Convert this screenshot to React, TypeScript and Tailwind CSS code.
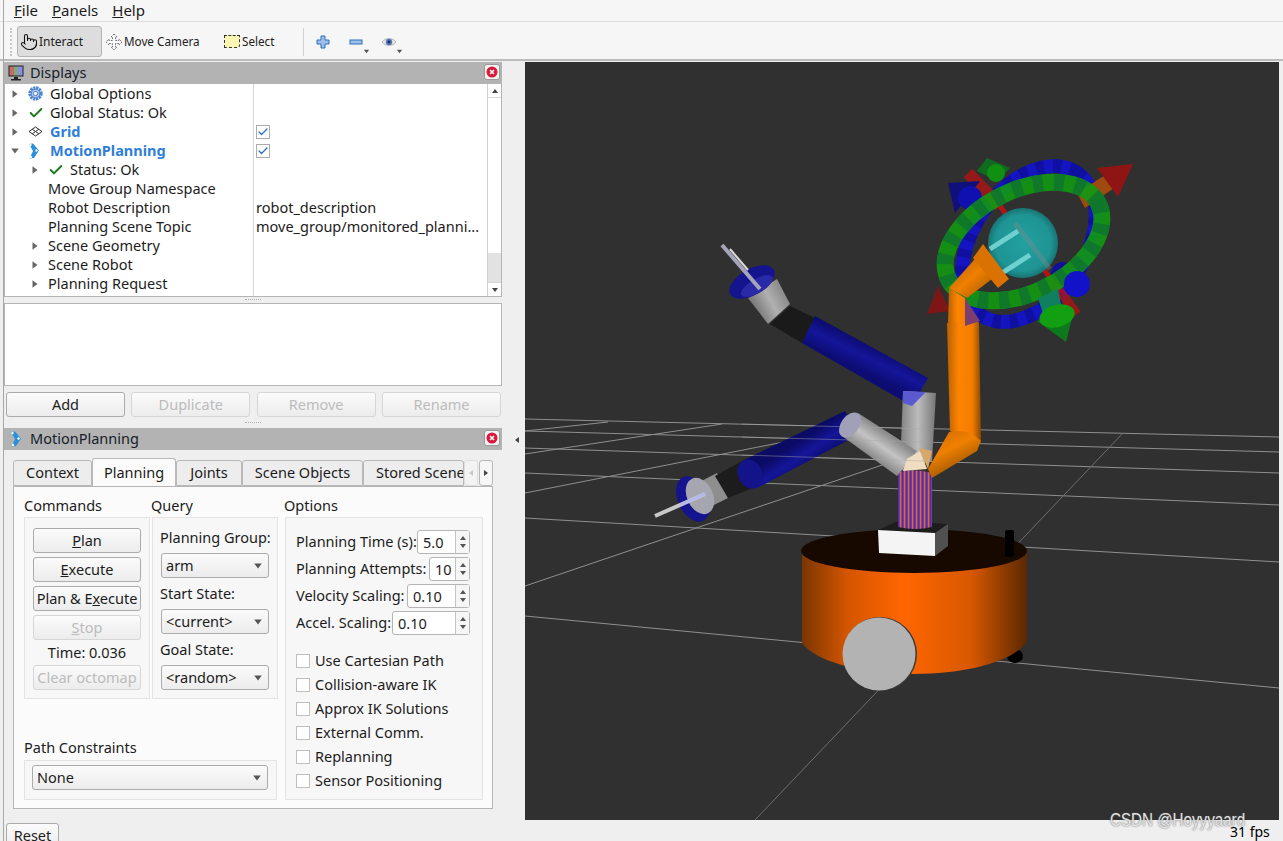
import { Check, Pointer } from "lucide-react";
import type { ReactNode } from "react";

const ui = { fontFamily: '"Noto Sans", "Open Sans", sans-serif' };

function Tri({ dir = "down", color = "#555", size = 8 }: { dir?: string; color?: string; size?: number }) {
  const points =
    dir === "down" ? "1,2 7,2 4,6" : dir === "up" ? "1,6 7,6 4,2" : dir === "right" ? "2,1 6,4 2,7" : "6,1 2,4 6,7";
  return (
    <svg width={size} height={size} viewBox="0 0 8 8" className="shrink-0">
      <polygon points={points} fill={color} />
    </svg>
  );
}

function GearIcon() {
  return (
    <svg width="15" height="15" viewBox="0 0 24 24">
      <circle cx="12" cy="12" r="9" fill="none" stroke="#4f86d6" strokeWidth="5" strokeDasharray="3.6 1.1" />
      <circle cx="12" cy="12" r="7" fill="#a9c6ee" stroke="#3f74c4" strokeWidth="1.4" />
      <circle cx="12" cy="12" r="3.4" fill="#fff" stroke="#3f74c4" strokeWidth="1.4" />
    </svg>
  );
}

function GridIcon() {
  return (
    <svg width="15" height="11" viewBox="0 0 15 11" fill="none" stroke="#333" strokeWidth="1">
      <path d="M7.5 1 14 5.500 7.500 10 1 5.500Z" />
      <path d="M4.200 3.200 10.800 7.800M10.800 3.200 4.200 7.800" />
    </svg>
  );
}

function PlanningIcon() {
  return (
    <svg width="12" height="16" viewBox="0 0 12 16">
      <path d="M1 1 5 0.500 11 7.500 6 15 1.500 15.500 5 8Z" fill="#2a8fdc" />
      <circle cx="2.500" cy="2" r="1.200" fill="#fff" />
      <circle cx="8.500" cy="7.500" r="1.200" fill="#fff" />
      <circle cx="3" cy="14" r="1.200" fill="#fff" />
    </svg>
  );
}

function CloseBtn() {
  return (
    <div className="mt-[2px] flex h-[16px] w-[16px] items-center justify-center self-start rounded-[3px] border border-[#9a9a9a] bg-[#f4f4f4]">
      <svg width="12" height="12" viewBox="0 0 12 12">
        <circle cx="6" cy="6" r="5.500" fill="#d9183b" />
        <path d="M4 4 8 8M8 4 4 8" stroke="#fff" strokeWidth="1.500" />
      </svg>
    </div>
  );
}

function TitleBar({ icon, title }: { icon: ReactNode; title: string }) {
  return (
    <div className="flex h-[22px] w-[498px] items-center justify-between bg-[#b3b3b3] pl-[3px] pr-[2px] text-[14.5px] text-[#15202b]">
      <div className="flex items-center gap-[6px]">
        <div className="flex w-[17px] justify-center">{icon}</div>
        <span>{title}</span>
      </div>
      <CloseBtn />
    </div>
  );
}

interface TreeRow {
  label: string;
  depth: number;
  arrow?: "right" | "down";
  icon?: ReactNode;
  bold?: boolean;
  checked?: boolean;
  value?: string;
}

const okIcon = <Check size={16} strokeWidth={3} color="#1c7a1c" />;

const treeRows: TreeRow[] = [
  { label: "Global Options", depth: 0, arrow: "right", icon: <GearIcon /> },
  { label: "Global Status: Ok", depth: 0, arrow: "right", icon: okIcon },
  { label: "Grid", depth: 0, arrow: "right", icon: <GridIcon />, bold: true, checked: true },
  { label: "MotionPlanning", depth: 0, arrow: "down", icon: <PlanningIcon />, bold: true, checked: true },
  { label: "Status: Ok", depth: 1, arrow: "right", icon: okIcon },
  { label: "Move Group Namespace", depth: 1 },
  { label: "Robot Description", depth: 1, value: "robot_description" },
  { label: "Planning Scene Topic", depth: 1, value: "move_group/monitored_planni..." },
  { label: "Scene Geometry", depth: 1, arrow: "right" },
  { label: "Scene Robot", depth: 1, arrow: "right" },
  { label: "Planning Request", depth: 1, arrow: "right" },
  { label: "Planning Metrics", depth: 1, arrow: "right" },
];

function Row({ row }: { row: TreeRow }) {
  return (
    <div className="flex h-[19px] shrink-0 items-center">
      <div className="flex h-full w-[249px] shrink-0 items-center border-r border-[#d4d4d4]">
        <div className={row.depth === 0 ? "flex w-[21px] pl-[5px]" : "flex w-[43px] pl-[25px]"}>
          {row.arrow && <Tri dir={row.arrow} color="#666" size={10} />}
        </div>
        {row.icon && (
          <div className={row.depth === 0 ? "flex w-[24px] pl-[2px]" : "flex w-[22px]"}>{row.icon}</div>
        )}
        <span className={row.bold ? "font-bold text-[#2f7ed8]" : ""}>{row.label}</span>
      </div>
      <div className="flex items-center pl-[2px]">
        {row.checked !== undefined && (
          <div className="flex h-[14px] w-[14px] items-center justify-center border border-[#adadad] bg-white">
            <Check size={12} strokeWidth={2.5} color="#2b6fc2" />
          </div>
        )}
        {row.value && <span className="whitespace-nowrap">{row.value}</span>}
      </div>
    </div>
  );
}

function PushButton({
  children,
  disabled,
  className,
}: {
  children: ReactNode;
  disabled?: boolean;
  className: string;
}) {
  return (
    <div
      className={`flex items-center justify-center rounded-[3px] border bg-gradient-to-b from-[#fbfbfb] to-[#ececec] ${
        disabled ? "border-[#d6d6d6] text-[#bcbcbc]" : "border-[#ababab] text-[#1c1c1c]"
      } ${className}`}
    >
      {children}
    </div>
  );
}

function Combo({ label, className }: { label: string; className: string }) {
  return (
    <div
      className={`flex h-[25px] items-center justify-between rounded-[3px] border border-[#ababab] bg-gradient-to-b from-[#fbfbfb] to-[#ececec] pl-[4px] pr-[5px] ${className}`}
    >
      <span>{label}</span>
      <Tri color="#555" size={10} />
    </div>
  );
}

function Spin({ value, className }: { value: string; className: string }) {
  return (
    <div className={`flex h-[24px] rounded-[3px] border border-[#b5b5b5] bg-white ${className}`}>
      <span className="flex-1 pl-[5px] leading-[23px]">{value}</span>
      <div className="flex w-[14px] flex-col items-center justify-center border-l border-[#c4c4c4] bg-[#f6f6f6]">
        <Tri dir="up" color="#555" />
        <Tri dir="down" color="#555" />
      </div>
    </div>
  );
}

function OptionRow({ label, value, spin }: { label: string; value: string; spin: string }) {
  return (
    <div className="flex h-[27px] items-center justify-between whitespace-nowrap">
      <span>{label}</span>
      <Spin value={value} className={spin} />
    </div>
  );
}

function Toggle({ label }: { label: string }) {
  return (
    <div className="flex h-[24px] items-center gap-[5px]">
      <div className="h-[14px] w-[14px] border border-[#c0c0c0] bg-white" />
      <span>{label}</span>
    </div>
  );
}

function Tab({ label, className, active }: { label: string; className: string; active?: boolean }) {
  return (
    <div
      className={`flex items-center justify-center overflow-hidden whitespace-nowrap rounded-t-[3px] border border-[#b8b8b8] ${
        active ? "h-[28px] border-b-0 bg-[#fbfbfb]" : "h-[26px] bg-[#ededed]"
      } ${className}`}
    >
      {label}
    </div>
  );
}

function Toolbar() {
  return (
    <div className="flex h-[39px] shrink-0 items-center border-b-2 border-[#bcbcbc] bg-[#f6f6f6] pl-[10px] pt-[2px] text-[11.7px] text-[#222]">
      <div className="h-[28px] w-[3px] border-l-2 border-dotted border-[#c6c6c6]" />
      <div className="ml-[4px] flex h-[31px] w-[85px] items-center rounded-[3px] border border-[#b4b4b4] bg-[#dddddd] pl-[2px]">
        <Pointer size={18} strokeWidth={1.4} color="#111" />
        <span className="ml-[1px] text-[12px]">Interact</span>
      </div>
      <div className="ml-[3px] flex w-[119px] items-center">
        <svg width="18" height="18" viewBox="0 0 18 18">
          <path
            d="M9 1 12 4H10.500V7.500H14V6L17 9 14 12V10.500H10.500V14H12L9 17 6 14H7.500V10.500H4V12L1 9 4 6V7.500H7.500V4H6Z"
            fill="#fff"
            stroke="#777"
            strokeWidth="1"
            strokeDasharray="2 1"
          />
        </svg>
        <span className="ml-[1px]">Move Camera</span>
      </div>
      <div className="flex w-[79px] items-center">
        <div className="h-[13px] w-[16px] rounded-br-[3px] border border-dashed border-[#333] bg-[#fbf6b4]" />
        <span className="ml-[2px]">Select</span>
      </div>
      <div className="h-[28px] w-px bg-[#d2d2d2]" />
      <svg width="14" height="14" viewBox="0 0 14 14" className="ml-[12px]">
        <path d="M5 1h4v4h4v4H9v4H5V9H1V5h4z" fill="#9cc0ea" stroke="#2f6fb8" strokeWidth="1" />
      </svg>
      <div className="relative ml-[19px]">
        <svg width="14" height="8" viewBox="0 0 14 8" className="block">
          <rect x="1" y="2" width="12" height="4" fill="#9cc0ea" stroke="#2f6fb8" />
        </svg>
        <div className="absolute left-[14px] top-[10px]">
          <Tri color="#555" size={7} />
        </div>
      </div>
      <div className="relative ml-[18px]">
        <svg width="16" height="12" viewBox="0 0 16 12" className="block">
          <path d="M1 6C4 1.500 12 1.500 15 6 12 10.500 4 10.500 1 6Z" fill="#e4e4e4" stroke="#b8b8b8" />
          <circle cx="8" cy="6" r="3.200" fill="#5a78c0" />
          <circle cx="8" cy="6" r="1.400" fill="#1d2b5a" />
        </svg>
        <div className="absolute left-[15px] top-[12px]">
          <Tri color="#555" size={7} />
        </div>
      </div>
    </div>
  );
}

function Scene() {
  const gridLines = [
    "525,418 1279,436",
    "525,430 1279,451",
    "525,447 1279,472",
    "525,472 1279,504",
    "525,517 1279,561",
    "525,615 1279,687",
    "525,430 608,421",
    "525,453 722,423",
    "525,492 870,424",
    "525,585 900,458",
  ];
  return (
    <svg viewBox="525 61 754 758" className="block h-[758px] w-[754px]">
      <defs>
        <linearGradient id="base" x1="0" x2="1" y1="0" y2="0">
          <stop offset="0" stopColor="#7a3600" />
          <stop offset="0.2" stopColor="#d45500" />
          <stop offset="0.45" stopColor="#ff6600" />
          <stop offset="0.75" stopColor="#d85800" />
          <stop offset="1" stopColor="#5a2800" />
        </linearGradient>
        <linearGradient id="link" x1="0" x2="1" y1="0" y2="0">
          <stop offset="0" stopColor="#b86200" />
          <stop offset="0.35" stopColor="#ff8400" />
          <stop offset="0.75" stopColor="#f27c00" />
          <stop offset="1" stopColor="#8a4a00" />
        </linearGradient>
        <linearGradient id="elbow" gradientUnits="userSpaceOnUse" x1="945" y1="430" x2="965" y2="470">
          <stop offset="0" stopColor="#d87000" />
          <stop offset="0.4" stopColor="#f08000" />
          <stop offset="1" stopColor="#945200" />
        </linearGradient>
        <linearGradient id="wrist" gradientUnits="userSpaceOnUse" x1="960" y1="262" x2="985" y2="290">
          <stop offset="0" stopColor="#c46a00" />
          <stop offset="0.5" stopColor="#f08000" />
          <stop offset="1" stopColor="#b86400" />
        </linearGradient>
        <linearGradient id="blueUpper" gradientUnits="userSpaceOnUse" x1="815" y1="315" x2="802" y2="342">
          <stop offset="0" stopColor="#0b0b6a" />
          <stop offset="0.5" stopColor="#15159a" />
          <stop offset="1" stopColor="#0c0c72" />
        </linearGradient>
        <linearGradient id="blueLower" gradientUnits="userSpaceOnUse" x1="845" y1="410" x2="860" y2="433">
          <stop offset="0" stopColor="#0b0b66" />
          <stop offset="0.5" stopColor="#15159a" />
          <stop offset="1" stopColor="#0c0c70" />
        </linearGradient>
        <linearGradient id="steel" x1="0" x2="1" y1="0" y2="0">
          <stop offset="0" stopColor="#808080" />
          <stop offset="0.5" stopColor="#bcbcbc" />
          <stop offset="1" stopColor="#767676" />
        </linearGradient>
        <linearGradient id="steelHand" gradientUnits="userSpaceOnUse" x1="750" y1="295" x2="778" y2="280">
          <stop offset="0" stopColor="#7e7e7e" />
          <stop offset="0.5" stopColor="#b0b0b0" />
          <stop offset="1" stopColor="#8a8a8a" />
        </linearGradient>
        <linearGradient id="steelLower" gradientUnits="userSpaceOnUse" x1="858" y1="412" x2="842" y2="435">
          <stop offset="0" stopColor="#8a8a8a" />
          <stop offset="0.5" stopColor="#c4c4c4" />
          <stop offset="1" stopColor="#8c8c8c" />
        </linearGradient>
        <radialGradient id="ball" cx="0.5" cy="0.5" r="0.5">
          <stop offset="0" stopColor="#22a0a0" />
          <stop offset="0.8" stopColor="#1f9494" />
          <stop offset="1" stopColor="#187474" />
        </radialGradient>
        <pattern id="stripes" width="4" height="3" patternUnits="userSpaceOnUse">
          <rect width="4" height="3" fill="#7b3f86" />
          <rect width="1.200" height="3" fill="#d9683f" />
          <rect x="2" width="1" height="3" fill="#4a2cc4" />
        </pattern>
      </defs>
      <rect x="525" y="61" width="754" height="758" fill="#303030" />
      {gridLines.map((l) => (
        <polyline key={l} points={l} fill="none" stroke="#8f8f8f" strokeWidth="1" />
      ))}
      <polyline points="1123,432 755,819" fill="none" stroke="#6e6e6e" strokeWidth="1" />

      {/* base */}
      <ellipse cx="1015" cy="655" rx="8" ry="7" fill="#000" />
      <path d="M802 551V642C815 660 860 673 914 673S1015 660 1027 640V550Z" fill="url(#base)" />
      <ellipse cx="914" cy="550" rx="113" ry="22" fill="#170800" />
      <rect x="1005" y="529" width="9" height="27" rx="2" fill="#000" />
      <circle cx="880" cy="653" r="37" fill="#3a3a3a" />
      <circle cx="879" cy="653" r="36.500" fill="#b3b3b3" />
      <path d="M878 529 898 520 948 523 935 532Z" fill="#1d1d1d" />
      <path d="M878 529 935 532V555L879 552Z" fill="#f4f4f4" />
      <path d="M935 532 948 523V545L935 555Z" fill="#505050" />

      {/* column */}
      <path d="M898 471Q915 467 932 472V526Q915 530 898 526Z" fill="url(#stripes)" />

      {/* orange arm */}
      <path d="M947 322 979 320 981 440 950 430Z" fill="url(#link)" />
      <path d="M928 468 949 431Q966 426 981 440L977 450 932 477Z" fill="url(#elbow)" />

      {/* upper arm, left side */}
      <path d="M748 297 777 278 790 303 768 323Z" fill="url(#steelHand)" />
      <path d="M790 305 815 317 802 342 770 323Z" fill="#1a1a1a" />
      <path d="M815 315 928 377 912 405 802 342Z" fill="url(#blueUpper)" />
      <ellipse cx="752" cy="281" rx="25" ry="13" transform="rotate(-30 752 281)" fill="#14148e" />
      <ellipse cx="757" cy="285" rx="18" ry="7" transform="rotate(-30 757 285)" fill="#2a2aa6" />
      <path d="M722 244 760 288" stroke="#a4a4bc" strokeWidth="4" />
      <path d="M730 248 748 269" stroke="#dcdcdc" strokeWidth="2" />
      <path d="M903 390 936 392 932 460 900 470Z" fill="url(#steel)" />
      <path d="M903 390 926 391 912 405 903 402Z" fill="#5a5ad0" />

      {/* lower arm, left side */}
      <path d="M688 487 717 472 728 497 702 510Z" fill="#8e8e8e" />
      <path d="M715 475 742 460 753 487 728 497Z" fill="#1c1c1c" />
      <path d="M742 460 845 410 860 433 757 487Z" fill="url(#blueLower)" />
      <ellipse cx="750" cy="473" rx="12" ry="15" transform="rotate(-25 750 473)" fill="#14148a" />
      <ellipse cx="693" cy="498" rx="15" ry="24" transform="rotate(-25 693 498)" fill="#14148e" />
      <ellipse cx="700" cy="495" rx="13" ry="19" transform="rotate(-25 700 495)" fill="#a6a6b0" />
      <path d="M655 515 705 493" stroke="#c8c8c8" strokeWidth="4" />
      <path d="M680 504 705 493" stroke="#b6b8f0" strokeWidth="3" />
      <path d="M858 412 842 435 897 475 917 450Z" fill="url(#steelLower)" />
      <ellipse cx="850" cy="424" rx="9" ry="14" transform="rotate(36 850 424)" fill="#a0a0b8" />
      <path d="M903 470 907 458 920 450 927 468Z" fill="#f0dcc0" />
      <path d="M932 450 928 468 919 447Z" fill="#d8a868" />
      <g stroke="#a8a8a8" strokeOpacity="0.45" strokeWidth="1">
        <path d="M742 423 925 428M742 436 925 441M742 454 925 460" />
      </g>

      {/* interactive marker */}
      <circle cx="1063" cy="273" r="12" fill="#10109a" />
      <ellipse cx="1029" cy="243" rx="86" ry="56" transform="rotate(-56 1029 243)" fill="none" stroke="#1414c0" strokeWidth="14" />
      <ellipse cx="1029" cy="243" rx="86" ry="56" transform="rotate(-56 1029 243)" fill="none" stroke="#0a0a70" strokeWidth="14" strokeDasharray="8 9" strokeOpacity="0.4" />
      <path d="M987 157 1010 167 997 180 977 170Z" fill="#0f6b1f" />
      <circle cx="996" cy="172" r="9" fill="#109010" />
      <path d="M968 172 1000 205" stroke="#b01414" strokeWidth="12" strokeOpacity="0.8" />
      <path d="M1000 205 1052 280" stroke="#b01414" strokeWidth="5" />
      <path d="M1052 280 1077 313" stroke="#b01414" strokeWidth="9" strokeOpacity="0.8" />
      <path d="M1077 192 1107 173 1117 185 1085 207Z" fill="#a04a10" />
      <path d="M1133 163 1097 167 1118 196Z" fill="#8f1515" />
      <path d="M948 182 980 180 955 212Z" fill="#10107a" />
      <circle cx="970" cy="197" r="12" fill="#1010b0" />
      <circle cx="1023" cy="242" r="35" fill="url(#ball)" />
      <path d="M1015 222 1050 268" stroke="#8a8a8a" strokeWidth="5" strokeOpacity="0.35" />
      <ellipse cx="1023.500" cy="240.500" rx="84" ry="51" transform="rotate(-27 1023.500 240.500)" fill="none" stroke="#129a12" strokeWidth="17" strokeOpacity="0.9" />
      <ellipse cx="1023.500" cy="240.500" rx="84" ry="51" transform="rotate(-27 1023.500 240.500)" fill="none" stroke="#0f7030" strokeWidth="17" strokeDasharray="10 11" strokeOpacity="0.75" />
      <path d="M990 248 1018 230M1002 272 1030 254" stroke="#6fd0d0" strokeWidth="5" />
      <path d="M927 313 938 285 950 310Z" fill="#7f1616" />
      <circle cx="1077" cy="283" r="13" fill="#1212c8" />
      <path d="M1038 297 1058 288 1062 309 1043 313Z" fill="#0f7f60" />
      <path d="M1066 341 1037 320 1074 310Z" fill="#0c7a1c" />
      <ellipse cx="1057" cy="315" rx="18" ry="11" transform="rotate(-15 1057 315)" fill="#12a012" />

      {/* wrist over the rings */}
      <path d="M965 297 975 322 948 322 949 287Z" fill="url(#link)" />
      <path d="M965 297 980 320 965 325Z" fill="#7a3f70" />
      <path d="M949 287 982 250 992 278 967 297Z" fill="url(#wrist)" />
      <path d="M973 257 983 243 1009 278 998 287Z" fill="#d97200" />
    </svg>
  );
}

export default function App() {
  return (
    <div style={ui} className="relative flex h-[841px] w-[1283px] flex-col overflow-hidden bg-[#efefef] text-[14.5px] text-[#1c1c1c]">
      {/* menu bar */}
      <div className="flex h-[22px] shrink-0 items-center gap-[14px] border-b border-[#dcdcdc] bg-[#f6f6f6] pl-[14px] text-[15px]">
        <span><span className="underline">F</span>ile</span>
        <span><span className="underline">P</span>anels</span>
        <span><span className="underline">H</span>elp</span>
      </div>
      <Toolbar />

      <div className="flex min-h-0 flex-1">
        {/* left dock */}
        <div className="flex w-[525px] shrink-0 flex-col pt-px">
          <div className="ml-[4px] flex w-[498px] flex-col">
            <TitleBar
              title="Displays"
              icon={
                <svg width="16" height="16" viewBox="0 0 16 16">
                  <rect x="0.500" y="0.500" width="15" height="11" fill="#222" />
                  <rect x="1.500" y="1.500" width="4.500" height="9" fill="#c46a6a" />
                  <rect x="6" y="1.500" width="4" height="9" fill="#7ea87e" />
                  <rect x="10" y="1.500" width="4.500" height="9" fill="#8c8ce0" />
                  <rect x="6" y="12" width="4" height="2" fill="#222" />
                  <rect x="3" y="14" width="10" height="1.500" fill="#222" />
                </svg>
              }
            />
            {/* display tree */}
            <div className="flex h-[213px] w-[498px] border border-t-0 border-[#b5b5b5] bg-white">
              <div className="flex min-w-0 flex-1 flex-col overflow-hidden">
                {treeRows.map((r) => (
                  <Row key={r.label} row={r} />
                ))}
              </div>
              <div className="flex w-[14px] shrink-0 flex-col border-l border-[#d0d0d0] bg-white">
                <div className="flex h-[14px] items-center justify-center border-b border-[#d8d8d8]">
                  <Tri dir="up" color="#444" />
                </div>
                <div className="flex-1" />
                <div className="h-[29px] bg-[#e2e2e2]" />
                <div className="flex h-[14px] items-center justify-center border-t border-[#d8d8d8]">
                  <Tri color="#444" />
                </div>
              </div>
            </div>
            <div className="flex h-[6px] justify-center">
              <div className="mt-[2px] h-px w-[16px] border-t border-dotted border-[#b0b0b0]" />
            </div>
            <div className="h-[83px] w-[498px] border border-[#b5b5b5] bg-white" />
            <div className="ml-[2px] mt-[6px] flex w-[495px] justify-between">
              <PushButton className="h-[25px] w-[119px]">Add</PushButton>
              <PushButton disabled className="h-[25px] w-[119px]">Duplicate</PushButton>
              <PushButton disabled className="h-[25px] w-[119px]">Remove</PushButton>
              <PushButton disabled className="h-[25px] w-[119px]">Rename</PushButton>
            </div>
            <div className="flex h-[11px] items-center justify-center">
              <div className="h-px w-[16px] border-t border-dotted border-[#b0b0b0]" />
            </div>
            <div className="relative">
              <TitleBar title="MotionPlanning" icon={<PlanningIcon />} />
              <div className="absolute left-[509px] top-[8px]">
                <Tri dir="left" color="#444" />
              </div>
            </div>

            {/* tabs */}
            <div className="ml-[9px] mt-[8px] flex h-[28px] w-[480px] items-end">
              <Tab label="Context" className="w-[79px]" />
              <Tab label="Planning" className="w-[84px]" active />
              <Tab label="Joints" className="w-[66px]" />
              <Tab label="Scene Objects" className="w-[121px]" />
              <Tab label="Stored Scene" className="w-[101px] justify-start pl-[12px]" />
              <div className="flex h-[26px] w-[14px] items-center justify-center rounded-[3px] border border-[#dedede] bg-[#f3f3f3]">
                <Tri dir="left" color="#c8c8c8" />
              </div>
              <div className="ml-px flex h-[26px] w-[14px] items-center justify-center rounded-[3px] border border-[#b8b8b8] bg-[#f6f6f6]">
                <Tri dir="right" color="#444" />
              </div>
            </div>

            {/* planning pane */}
            <div className="ml-[9px] flex h-[323px] w-[480px] gap-[3px] border border-[#b5b5b5] bg-[#fbfbfb] pl-[10px] pt-[8px]">
              <div className="flex w-[254px] shrink-0 flex-col">
                <div className="flex">
                  <div className="w-[127px]">
                    <div className="h-[22px] leading-[21px]">Commands</div>
                    <div className="flex h-[182px] w-[126px] flex-col items-center border border-[#e4e4e4] bg-[#f7f7f7] pt-[10px]">
                      <PushButton className="h-[25px] w-[108px]"><span><span className="underline">P</span>lan</span></PushButton>
                      <PushButton className="mt-[4px] h-[25px] w-[108px]"><span><span className="underline">E</span>xecute</span></PushButton>
                      <PushButton className="mt-[4px] h-[25px] w-[108px] whitespace-nowrap"><span>Plan &amp; E<span className="underline">x</span>ecute</span></PushButton>
                      <PushButton disabled className="mt-[4px] h-[25px] w-[108px]"><span><span className="underline">S</span>top</span></PushButton>
                      <div className="flex h-[25px] items-center">Time: 0.036</div>
                      <PushButton disabled className="h-[25px] w-[108px] whitespace-nowrap">Clear octomap</PushButton>
                    </div>
                  </div>
                  <div className="w-[127px]">
                    <div className="h-[22px] leading-[21px]">Query</div>
                    <div className="ml-px flex h-[182px] w-[126px] flex-col border border-[#e4e4e4] bg-[#f7f7f7] pl-[7px] pt-[8px]">
                      <div className="h-[27px] whitespace-nowrap leading-[22px]">Planning Group:</div>
                      <Combo label="arm" className="ml-px w-[108px]" />
                      <div className="mt-[6px] h-[25px] leading-[18px]">Start State:</div>
                      <Combo label="<current>" className="ml-px w-[108px]" />
                      <div className="mt-[6px] h-[25px] leading-[18px]">Goal State:</div>
                      <Combo label="<random>" className="ml-px w-[108px]" />
                    </div>
                  </div>
                </div>
                <div className="mt-[39px] h-[22px] leading-[19px]">Path Constraints</div>
                <div className="h-[40px] w-[253px] border border-[#e4e4e4] bg-[#f7f7f7] pl-[7px] pt-[4px]">
                  <Combo label="None" className="w-[236px]" />
                </div>
              </div>
              <div className="w-[201px] shrink-0 pl-[3px]">
                <div className="h-[22px] leading-[21px]">Options</div>
                <div className="ml-px h-[283px] w-[198px] border border-[#e4e4e4] bg-[#f7f7f7] pl-[10px] pr-[12px] pt-[10px]">
                  <OptionRow label="Planning Time (s):" value="5.0" spin="w-[53px]" />
                  <OptionRow label="Planning Attempts:" value="10" spin="w-[41px]" />
                  <OptionRow label="Velocity Scaling:" value="0.10" spin="w-[63px]" />
                  <OptionRow label="Accel. Scaling:" value="0.10" spin="w-[78px]" />
                  <div className="mt-[13px]">
                    <Toggle label="Use Cartesian Path" />
                    <Toggle label="Collision-aware IK" />
                    <Toggle label="Approx IK Solutions" />
                    <Toggle label="External Comm." />
                    <Toggle label="Replanning" />
                    <Toggle label="Sensor Positioning" />
                  </div>
                </div>
              </div>
            </div>

            <PushButton className="ml-[2px] mt-[14px] h-[26px] w-[53px]">Reset</PushButton>
          </div>
        </div>

        {/* 3d view */}
        <div className="w-[754px] shrink-0 pt-px">
          <Scene />
        </div>
      </div>

      <div className="absolute left-[3px] top-0 h-full w-px bg-[#a8a8a8]" />
      <div className="absolute left-[1230px] top-[821px] text-[14px] text-black">31 fps</div>
      <div
        className="absolute left-[1110px] top-[806px] origin-left scale-x-[0.82] whitespace-nowrap text-[18.5px] text-[#e4e4e4] [text-shadow:0_0_2px_#555]"
        style={{ fontFamily: '"Liberation Sans", sans-serif' }}
      >
        CSDN @Hoyyyaard
      </div>
    </div>
  );
}
